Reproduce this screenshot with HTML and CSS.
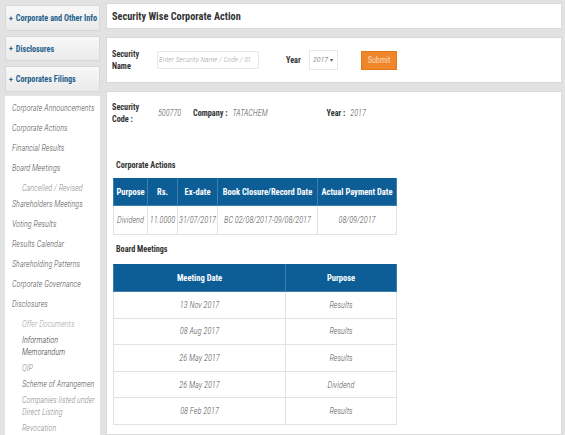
FILE: index.html
```html
<!DOCTYPE html>
<html lang="en">
<head>
    <meta charset="UTF-8">
    <title>Security Wise Corporate Action</title>
    <link rel="stylesheet" href="styles.css">
</head>
<body>
    <div class="page">
        <aside class="sidebar">
            <a href="#" class="side-btn"><span class="plus">+</span> Corporate and Other Info</a>
            <a href="#" class="side-btn"><span class="plus">+</span> Disclosures</a>
            <a href="#" class="side-btn"><span class="plus">+</span> Corporates Filings</a>
            <ul class="side-list">
                <li>Corporate Announcements</li>
                <li>Corporate Actions</li>
                <li>Financial Results</li>
                <li>Board Meetings</li>
                <li class="sub light cancelled">Cancelled / Revised</li>
                <li>Shareholders Meetings</li>
                <li>Voting Results</li>
                <li>Results Calendar</li>
                <li>Shareholding Patterns</li>
                <li>Corporate Governance</li>
                <li>Disclosures</li>
                <li class="sub first lighter">Offer Documents</li>
                <li class="sub dark">Information<br>Memorandum</li>
                <li class="sub light">QIP</li>
                <li class="sub">Scheme of Arrangemen</li>
                <li class="sub light">Companies listed under<br>Direct Listing</li>
                <li class="sub light">Revocation</li>
            </ul>
        </aside>

        <main class="main">
            <div class="panel title-panel">
                <h1>Security Wise Corporate Action</h1>
            </div>

            <div class="panel form-panel">
                <label class="field-label name-label">Security<br>Name</label>
                <div class="text-input">Enter Security Name / Code / ID</div>
                <label class="field-label year-label">Year</label>
                <div class="select-box">2017 <span class="caret">&#9662;</span></div>
                <button class="submit-btn">Submit</button>
            </div>

            <div class="panel result-panel">
                <div class="info-row">
                    <span class="field-label code-label">Security<br>Code :</span>
                    <span class="val code-val">500770</span>
                    <span class="field-label">Company :</span>
                    <span class="val company-val">TATACHEM</span>
                    <span class="field-label">Year :</span>
                    <span class="val year-val">2017</span>
                </div>

                <h2 class="section-title">Corporate Actions</h2>
                <table class="data-table actions-table">
                    <thead>
                        <tr>
                            <th class="c1">Purpose</th>
                            <th class="c2">Rs.</th>
                            <th class="c3">Ex-date</th>
                            <th class="c4">Book Closure/Record Date</th>
                            <th class="c5">Actual Payment Date</th>
                        </tr>
                    </thead>
                    <tbody>
                        <tr>
                            <td>Dividend</td>
                            <td>11.0000</td>
                            <td>31/07/2017</td>
                            <td>BC 02/08/2017-09/08/2017</td>
                            <td>08/09/2017</td>
                        </tr>
                    </tbody>
                </table>

                <h2 class="section-title board-title">Board Meetings</h2>
                <table class="data-table meetings-table">
                    <thead>
                        <tr>
                            <th class="m1">Meeting Date</th>
                            <th>Purpose</th>
                        </tr>
                    </thead>
                    <tbody>
                        <tr><td>13 Nov 2017</td><td>Results</td></tr>
                        <tr><td>08 Aug 2017</td><td>Results</td></tr>
                        <tr><td>26 May 2017</td><td>Results</td></tr>
                        <tr><td>26 May 2017</td><td>Dividend</td></tr>
                        <tr><td>08 Feb 2017</td><td>Results</td></tr>
                    </tbody>
                </table>
            </div>
        </main>
    </div>
</body>
</html>
```

FILE: styles.css
```css
body { margin: 0; background-color: #e2e2e2; font-family: "Roboto Condensed", "Liberation Sans", Arial, sans-serif; font-size: 8.2px; color: #333; overflow: hidden; }
.page { display: flex; gap: 6px; padding: 0 3px 0 5px; height: 435px; }

/* sidebar */
.sidebar { width: 95px; flex-shrink: 0; padding-top: 5px; display: flex; flex-direction: column; }
.side-btn { display: flex; align-items: center; flex-shrink: 0; height: 26px; margin-bottom: 5px; padding-left: 3px; background: linear-gradient(#f8f8f8, #eaeaea); border: 1px solid #d8d8d8; box-sizing: border-box; color: #1f5f8b; font-weight: bold; font-size: 8.2px; text-decoration: none; white-space: nowrap; }
.side-btn:nth-child(2) { height: 25px; }
.side-btn:nth-child(3) { margin-bottom: 4px; }
.plus { margin-right: 3px; font-size: 8px; }
.side-list { flex: 1; min-height: 0; overflow: hidden; list-style: none; margin: 0; padding: 2px 0 0 7px; background-color: #fff; }
.side-list li { font-style: italic; font-weight: 350; color: #555; line-height: 20px; font-size: 8.2px; white-space: nowrap; }
.side-list li.sub { line-height: 12px; padding: 2px 0 2px 10px; }
.side-list li.cancelled { padding: 4px 0 0 10px; }
.side-list li.first { margin-top: 2px; }
.side-list li.light { color: #8c8c8c; }
.side-list li.lighter { color: #a5a5a5; }
.side-list li.dark { color: #383838; }

/* main */
.main { flex: 1; padding-top: 3px; display: flex; flex-direction: column; gap: 8px; }
.panel { background-color: #fff; border: 1px solid #d9d9d9; box-sizing: border-box; flex-shrink: 0; }
.title-panel { height: 26px; display: flex; align-items: center; padding-left: 5px; }
.title-panel h1 { margin: 0; font-size: 10.3px; font-weight: bold; color: #333; }

.form-panel { height: 46px; display: flex; align-items: center; padding-left: 5px; }
.field-label { font-weight: bold; font-size: 8.2px; line-height: 12px; color: #333; white-space: nowrap; }
.name-label { width: 45px; }
.text-input { width: 102px; height: 18px; box-sizing: border-box; border: 1px solid #e8e8e8; color: #a3a3a3; font-style: italic; font-weight: 350; font-size: 7.6px; line-height: 16px; padding-left: 1px; white-space: nowrap; overflow: hidden; }
.year-label { margin-left: 27px; width: 23px; }
.select-box { width: 29px; height: 20px; box-sizing: border-box; border: 1px solid #e8e8e8; font-style: italic; font-weight: 350; font-size: 8px; line-height: 18px; padding-left: 3px; color: #555; white-space: nowrap; }
.caret { font-style: normal; font-size: 6px; }
.submit-btn { margin-left: 23px; width: 36px; height: 19px; background-color: #f0862a; border: 1px solid #e3781d; color: #fcdcc0; font-family: inherit; font-size: 8.2px; padding: 0; }

.result-panel { flex: 1 1 auto; padding: 9px 0 0 5px; }
.info-row { display: flex; align-items: center; }
.code-label { width: 46px; }
.val { font-style: italic; font-weight: 350; color: #555; font-size: 8.2px; }
.code-val { width: 35px; }
.company-val { margin-left: 5px; width: 94px; }
.year-val { margin-left: 5px; }

.section-title { margin: 33px 0 6px 4px; font-size: 8.2px; font-weight: bold; line-height: 14px; color: #333; }
.board-title { margin-top: 7px; margin-bottom: 8px; }

.data-table { border-collapse: collapse; width: 284px; table-layout: fixed; margin-left: 1px; }
.data-table th { background-color: #0d5e96; color: #fff; font-weight: bold; font-size: 8.5px; border: 1px solid #3c7fae; border-top-color: #0d5e96; text-align: center; padding: 0; white-space: nowrap; }
.data-table td { border: 1px solid #e2e2e2; font-style: italic; font-weight: 350; color: #555; font-size: 8.3px; text-align: center; padding: 0; white-space: nowrap; }
.actions-table th { height: 26px; }
.actions-table td { height: 28px; }
.actions-table .c1 { width: 33px; }
.actions-table .c2 { width: 29px; }
.actions-table .c3 { width: 39px; }
.actions-table .c4 { width: 99px; }
.meetings-table th { height: 26px; }
.meetings-table td { height: 25.6px; }
.meetings-table .m1 { width: 171px; }
```
